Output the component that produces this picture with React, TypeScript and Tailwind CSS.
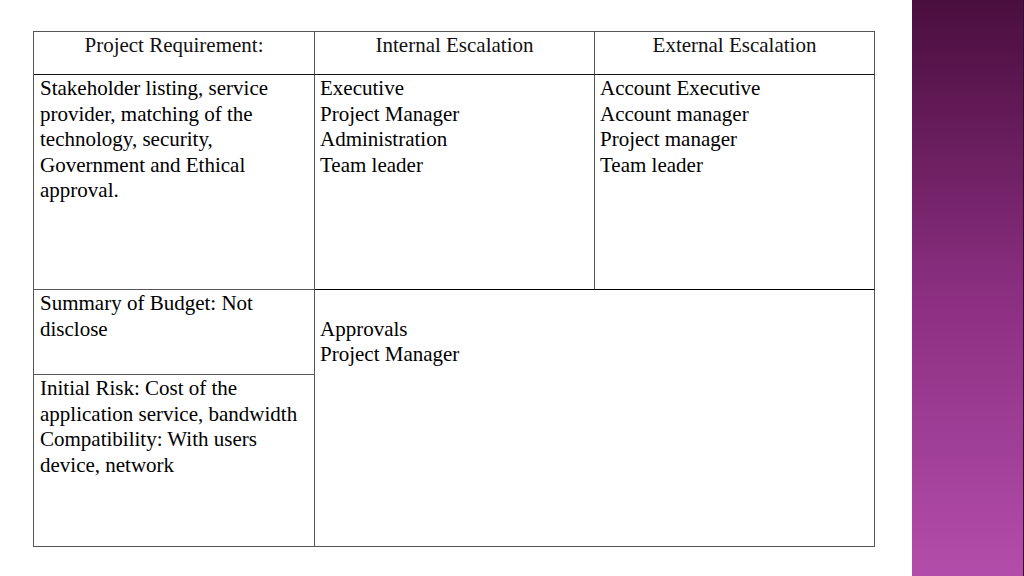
import React from "react";

const serif = { fontFamily: '"Liberation Serif", "Times New Roman", serif' };

function Lines({ items }: { items: string[] }) {
  return (
    <>
      {items.map((t, i) => (
        <div key={i} className="whitespace-nowrap">{t === "" ? "\u00a0" : t}</div>
      ))}
    </>
  );
}

export default function App() {
  const cell = "border-r border-b border-[#555555] pl-[5px] pr-[6px] pt-[1px] text-[21px] leading-[25.5px] text-black";
  const head = "border-r border-b border-[#555555] border-b-[#111111] pt-0 text-center text-[21px] leading-[26px] text-[#111111]";

  return (
    <div className="flex h-[576px] w-[1024px] bg-white" style={serif}>
      {/* slide body */}
      <main className="flex-1 pl-[33px] pt-[31px]">
        <div className="grid w-[842px] grid-cols-[281px_280px_280px] grid-rows-[43px_215px_85px_172px] border-t border-l border-[#555555]">
          <div className={head}>Project Requirement:</div>
          <div className={head}>Internal Escalation</div>
          <div className={head}>External Escalation</div>

          <div className={`${cell} pl-[6px]`}>
            <Lines
              items={[
                "Stakeholder listing, service",
                "provider, matching of the",
                "technology, security,",
                "Government and Ethical",
                "approval.",
              ]}
            />
          </div>
          <div className={cell}>
            <Lines items={["Executive", "Project Manager", "Administration", "Team leader"]} />
          </div>
          <div className={cell}>
            <Lines items={["Account Executive", "Account manager", "Project manager", "Team leader"]} />
          </div>

          <div className={`${cell} pl-[6px]`}>
            <Lines items={["Summary of Budget: Not", "disclose"]} />
          </div>
          <div className={`${cell} col-span-2 row-span-2 border-t border-t-black -mt-px`}>
            <Lines items={["", "Approvals", "Project Manager"]} />
          </div>

          <div className={`${cell} pl-[6px]`}>
            <Lines
              items={[
                "Initial Risk: Cost of the",
                "application service, bandwidth",
                "Compatibility: With users",
                "device, network",
              ]}
            />
          </div>
        </div>
      </main>

      {/* purple side band */}
      <aside className="w-[112px] border-r border-r-[#3a0a30] bg-gradient-to-b from-[#4a0e3e] via-[#8a2e80] to-[#b34dab]" />
    </div>
  );
}
